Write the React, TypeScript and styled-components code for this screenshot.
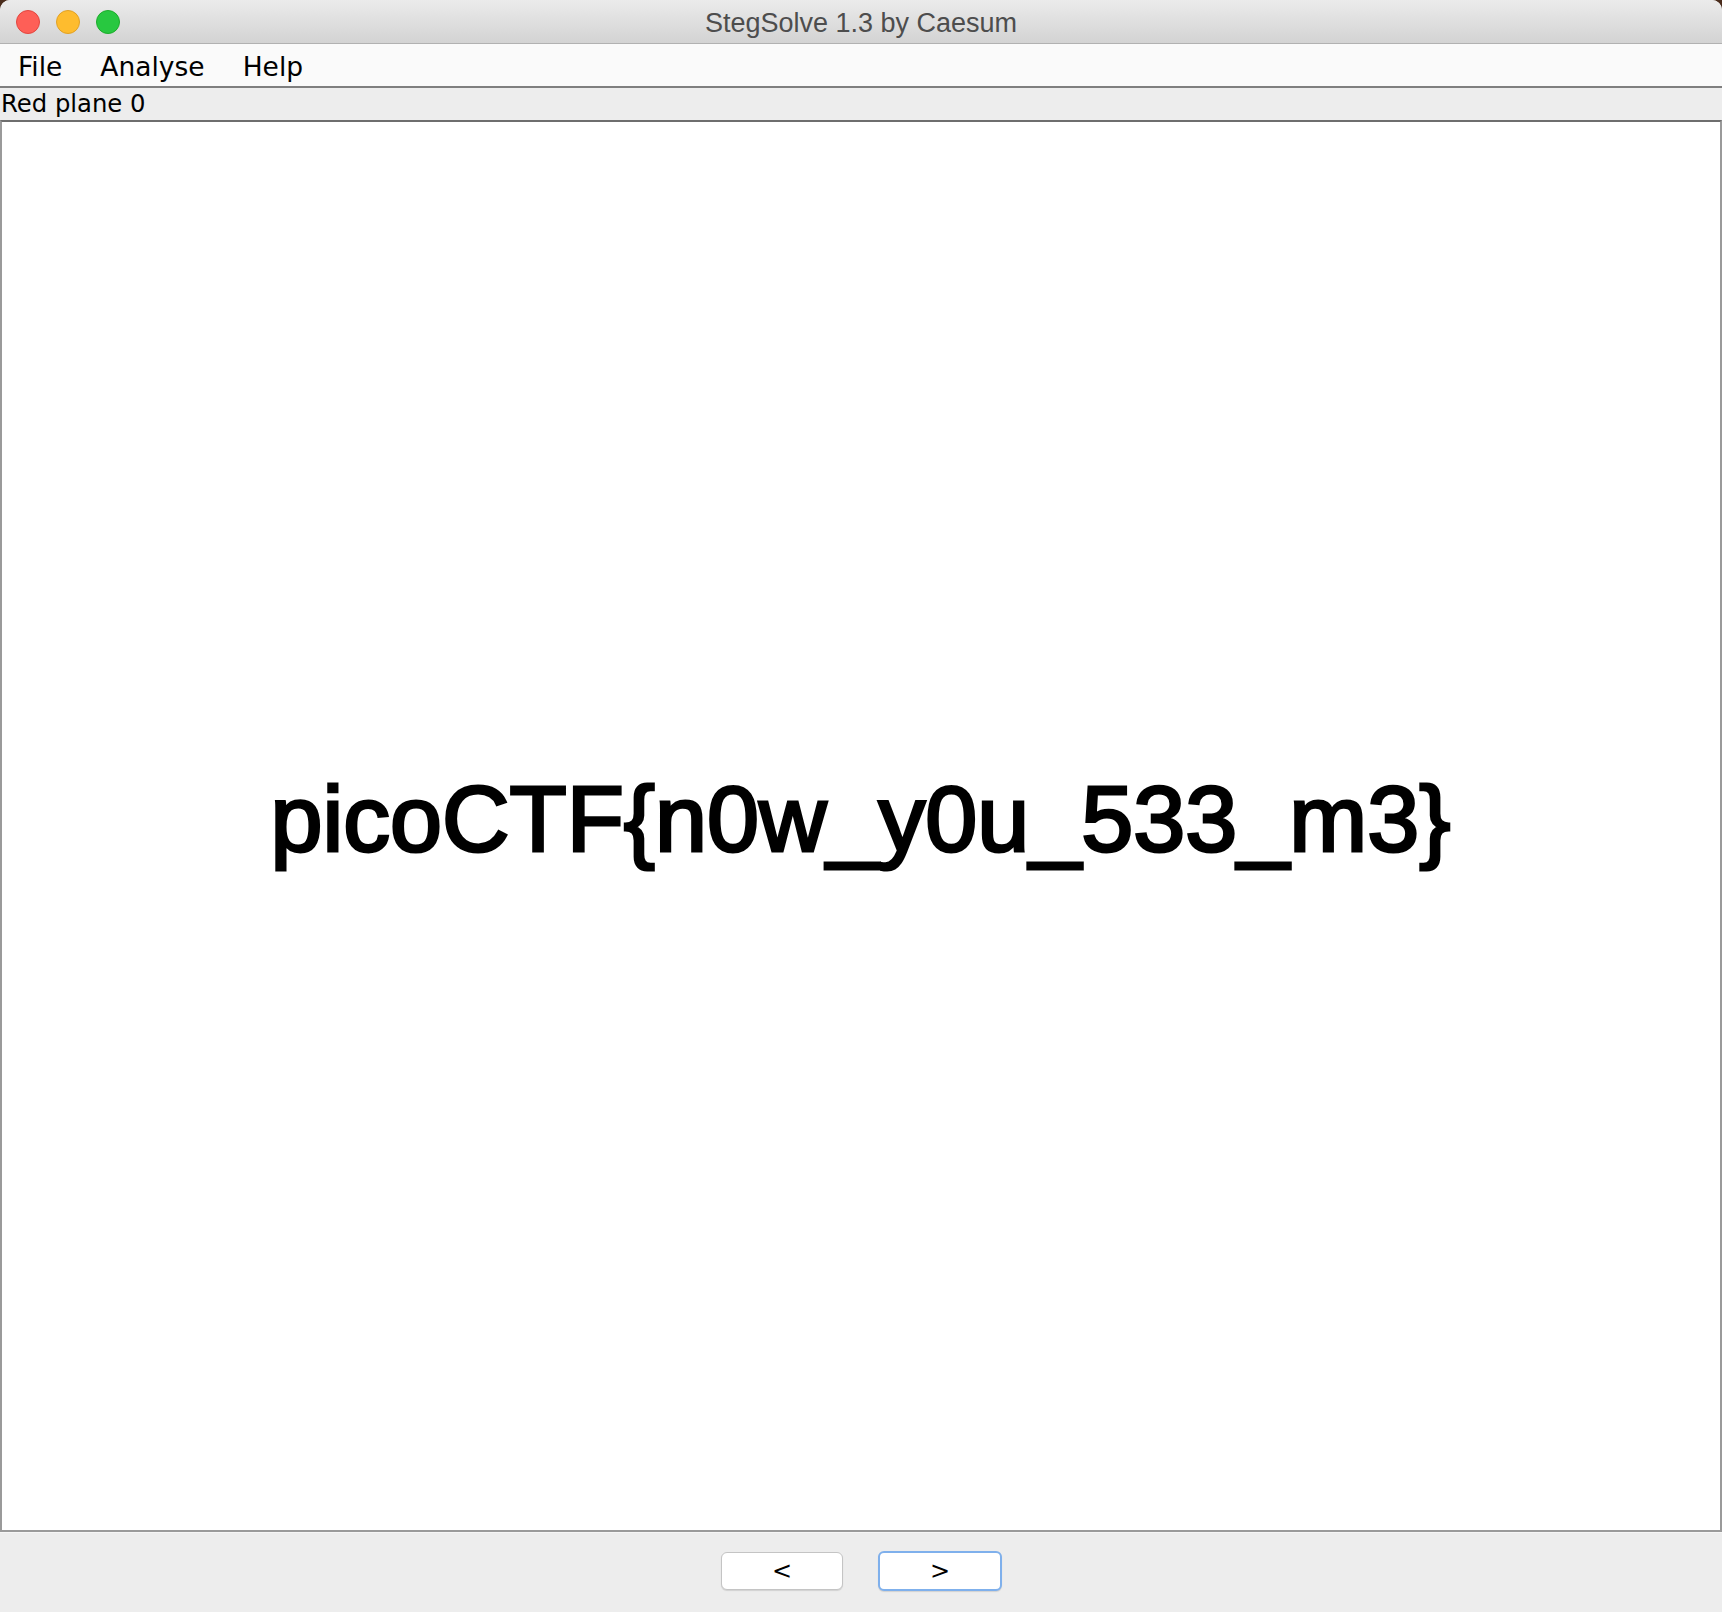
import React from "react";
import styled, { createGlobalStyle } from "styled-components";

const Global = createGlobalStyle`
  html, body { margin: 0; padding: 0; background: #4a2c1c; }
  #root { width: 1722px; height: 1612px; }
`;

const Window = styled.div`
  width: 1722px;
  height: 1612px;
  display: flex;
  flex-direction: column;
  background: #ededed;
  border-radius: 10px 10px 0 0;
  overflow: hidden;
`;

const TitleBar = styled.div`
  position: relative;
  height: 43px;
  flex: none;
  display: flex;
  align-items: center;
  justify-content: center;
  background: linear-gradient(#ebebeb, #d3d3d3);
  border-bottom: 1px solid #b1b1b1;
`;

const Lights = styled.div`
  position: absolute;
  left: 16px;
  top: 10px;
  display: flex;
  gap: 16px;
`;

const Light = styled.span<{ $fill: string; $ring: string }>`
  width: 24px;
  height: 24px;
  box-sizing: border-box;
  border-radius: 50%;
  background: ${(p) => p.$fill};
  border: 1px solid ${(p) => p.$ring};
`;

const Title = styled.div`
  font-family: "Liberation Sans", Arial, sans-serif;
  font-size: 27px;
  color: #4d4d4d;
  margin-top: 3px;
`;

const MenuBar = styled.div`
  height: 42px;
  flex: none;
  display: flex;
  align-items: center;
  background: #fafafa;
  border-bottom: 2px solid #7f7f7f;
`;

const MenuItem = styled.div`
  font-family: "DejaVu Sans", sans-serif;
  font-size: 26.5px;
  color: #000;
  padding: 0 19px;
  line-height: 42px;
  margin-top: 4px;
  &:first-child { padding-left: 18px; }
`;

const Label = styled.div`
  height: 32px;
  flex: none;
  display: flex;
  align-items: center;
  padding-left: 1px;
  font-family: "DejaVu Sans", sans-serif;
  font-size: 24.3px;
  line-height: 36px;
  color: #000;
  background: #ededed;
`;

const ImagePanel = styled.div`
  flex: none;
  background: #fff;
  border: 2px solid #9a9a9a;
  border-top-color: #6e6e6e;
  display: flex;
  align-items: center;
  justify-content: center;
  padding-bottom: 14px;
  box-sizing: content-box;
  height: 1394px;
`;

const Flag = styled.div`
  font-family: "Liberation Sans", Arial, sans-serif;
  font-size: 93.5px;
  line-height: 1;
  color: #000;
  -webkit-text-stroke: 3px #000;
  white-space: nowrap;
  margin-left: -1px;
`;

const Footer = styled.div`
  flex: 1;
  display: flex;
  justify-content: center;
  align-items: flex-start;
  gap: 35px;
  padding-top: 19px;
  border-top: 1px solid #f6f6f6;
  padding-left: 1px;
`;

const Button = styled.button<{ $focused?: boolean }>`
  width: ${(p) => (p.$focused ? "124px" : "122px")};
  height: ${(p) => (p.$focused ? "40px" : "38px")};
  margin-top: ${(p) => (p.$focused ? "-1px" : "0")};
  box-sizing: border-box;
  background: #fff;
  border: ${(p) => (p.$focused ? "2px solid #7fb0ec" : "1px solid #c4c4c4")};
  border-radius: 6px;
  box-shadow: 0 1px 1px rgba(0, 0, 0, 0.12);
  font-family: "DejaVu Sans", sans-serif;
  font-size: 24px;
  color: #000;
  display: flex;
  align-items: center;
  justify-content: center;
  padding: 0;
  cursor: default;
`;

export default function App() {
  return (
    <>
      <Global />
      <Window>
        <TitleBar>
          <Lights>
            <Light $fill="#fe5f57" $ring="#e2463f" />
            <Light $fill="#febc2e" $ring="#e1a125" />
            <Light $fill="#28c840" $ring="#1dac2b" />
          </Lights>
          <Title>StegSolve 1.3 by Caesum</Title>
        </TitleBar>
        <MenuBar>
          <MenuItem>File</MenuItem>
          <MenuItem>Analyse</MenuItem>
          <MenuItem>Help</MenuItem>
        </MenuBar>
        <Label>Red plane 0</Label>
        <ImagePanel>
          <Flag>picoCTF{"{"}n0w_y0u_533_m3{"}"}</Flag>
        </ImagePanel>
        <Footer>
          <Button>&lt;</Button>
          <Button $focused>&gt;</Button>
        </Footer>
      </Window>
    </>
  );
}
